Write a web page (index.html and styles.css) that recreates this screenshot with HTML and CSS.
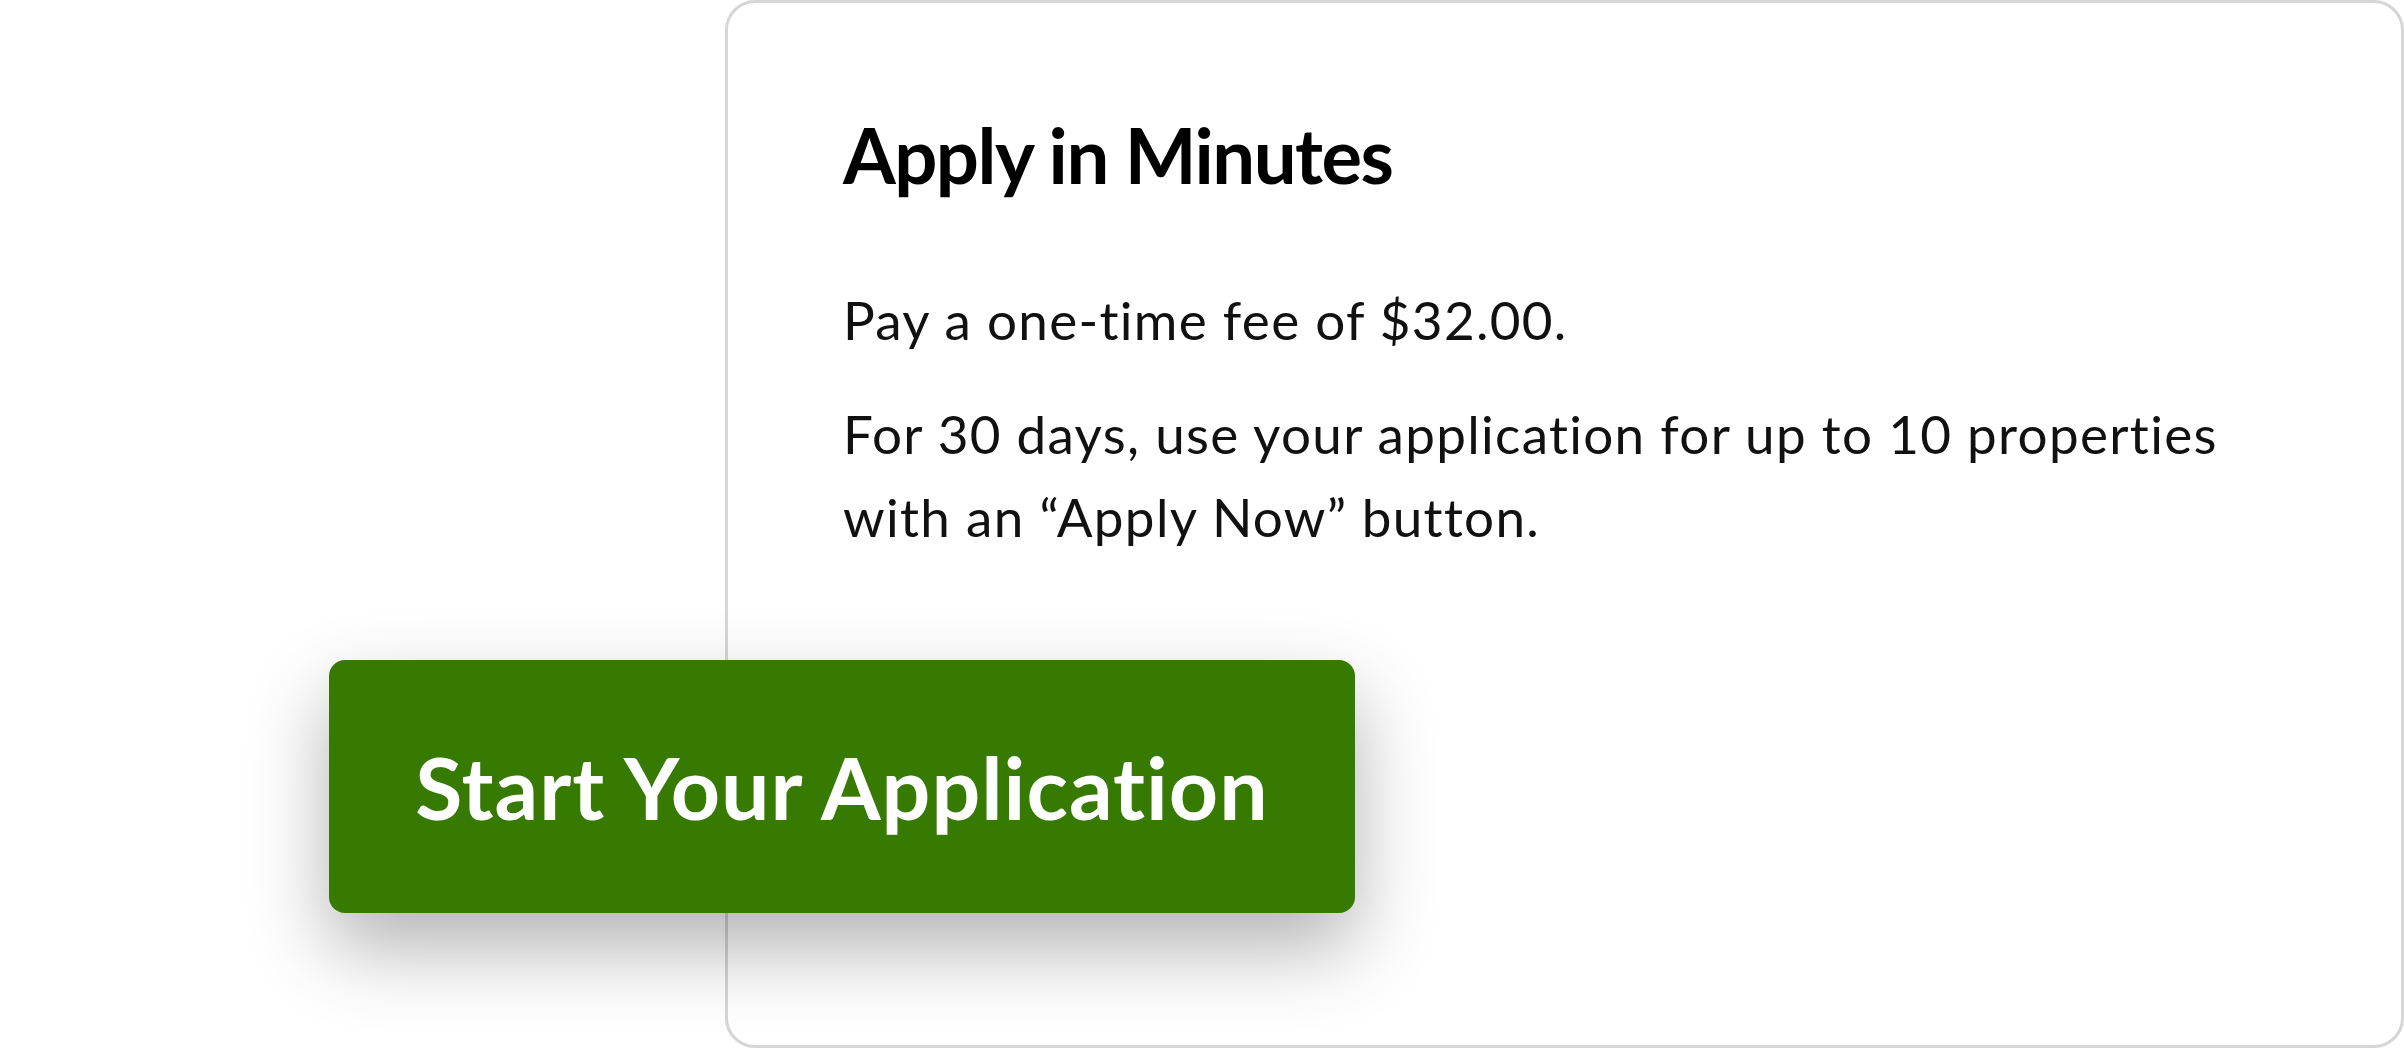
FILE: index.html
```html
<!DOCTYPE html>
<html>

<head>
    <meta charset="UTF-8">
    <title>Apply in Minutes</title>
    <link rel="stylesheet" href="styles.css">
</head>
<body>
    <div class="stage">
        <div class="card">
            <h2 class="card-title">Apply in Minutes</h2>
            <p class="card-text">Pay a one-time fee of $32.00.</p>
            <p class="card-text">For 30 days, use your application for up to 10 properties with an &ldquo;Apply Now&rdquo; button.</p>
        </div>
        <button class="start-btn">Start Your Application</button>
    </div>
</body>

</html>
```

FILE: styles.css
```css
body {
    margin: 0;
    background: #fff;
    font-family: "Lato", "Liberation Sans", sans-serif;
    color: #000;
}

.stage {
    position: relative;
    height: 100vh;
    display: flex;
    justify-content: flex-end;
}

.card {
    box-sizing: border-box;
    width: 1679px;
    height: 1048px;
    border: 3px solid #d6d6d6;
    border-radius: 30px;
    padding: 106px 40px 0 115px;
}

.card-title {
    margin: 0 0 78px;
    font-size: 76px;
    font-weight: 700;
    line-height: 1.2;
    letter-spacing: -1.5px;
}

.card-text {
    max-width: 1440px;
    margin: 0 0 31px;
    font-size: 53px;
    font-weight: 400;
    line-height: 83px;
    letter-spacing: 1.3px;
    color: #111;
}

/* sits over the card's left edge */
.start-btn {
    position: absolute;
    left: 329px;
    top: 660px;
    width: 1026px;
    height: 253px;
    border: none;
    border-radius: 16px;
    background: #377a01;
    color: #fff;
    font-family: inherit;
    font-size: 86px;
    font-weight: 700;
    letter-spacing: 1px;
    box-shadow: 0 35px 80px rgba(0, 0, 0, 0.3);
    cursor: pointer;
}
```
